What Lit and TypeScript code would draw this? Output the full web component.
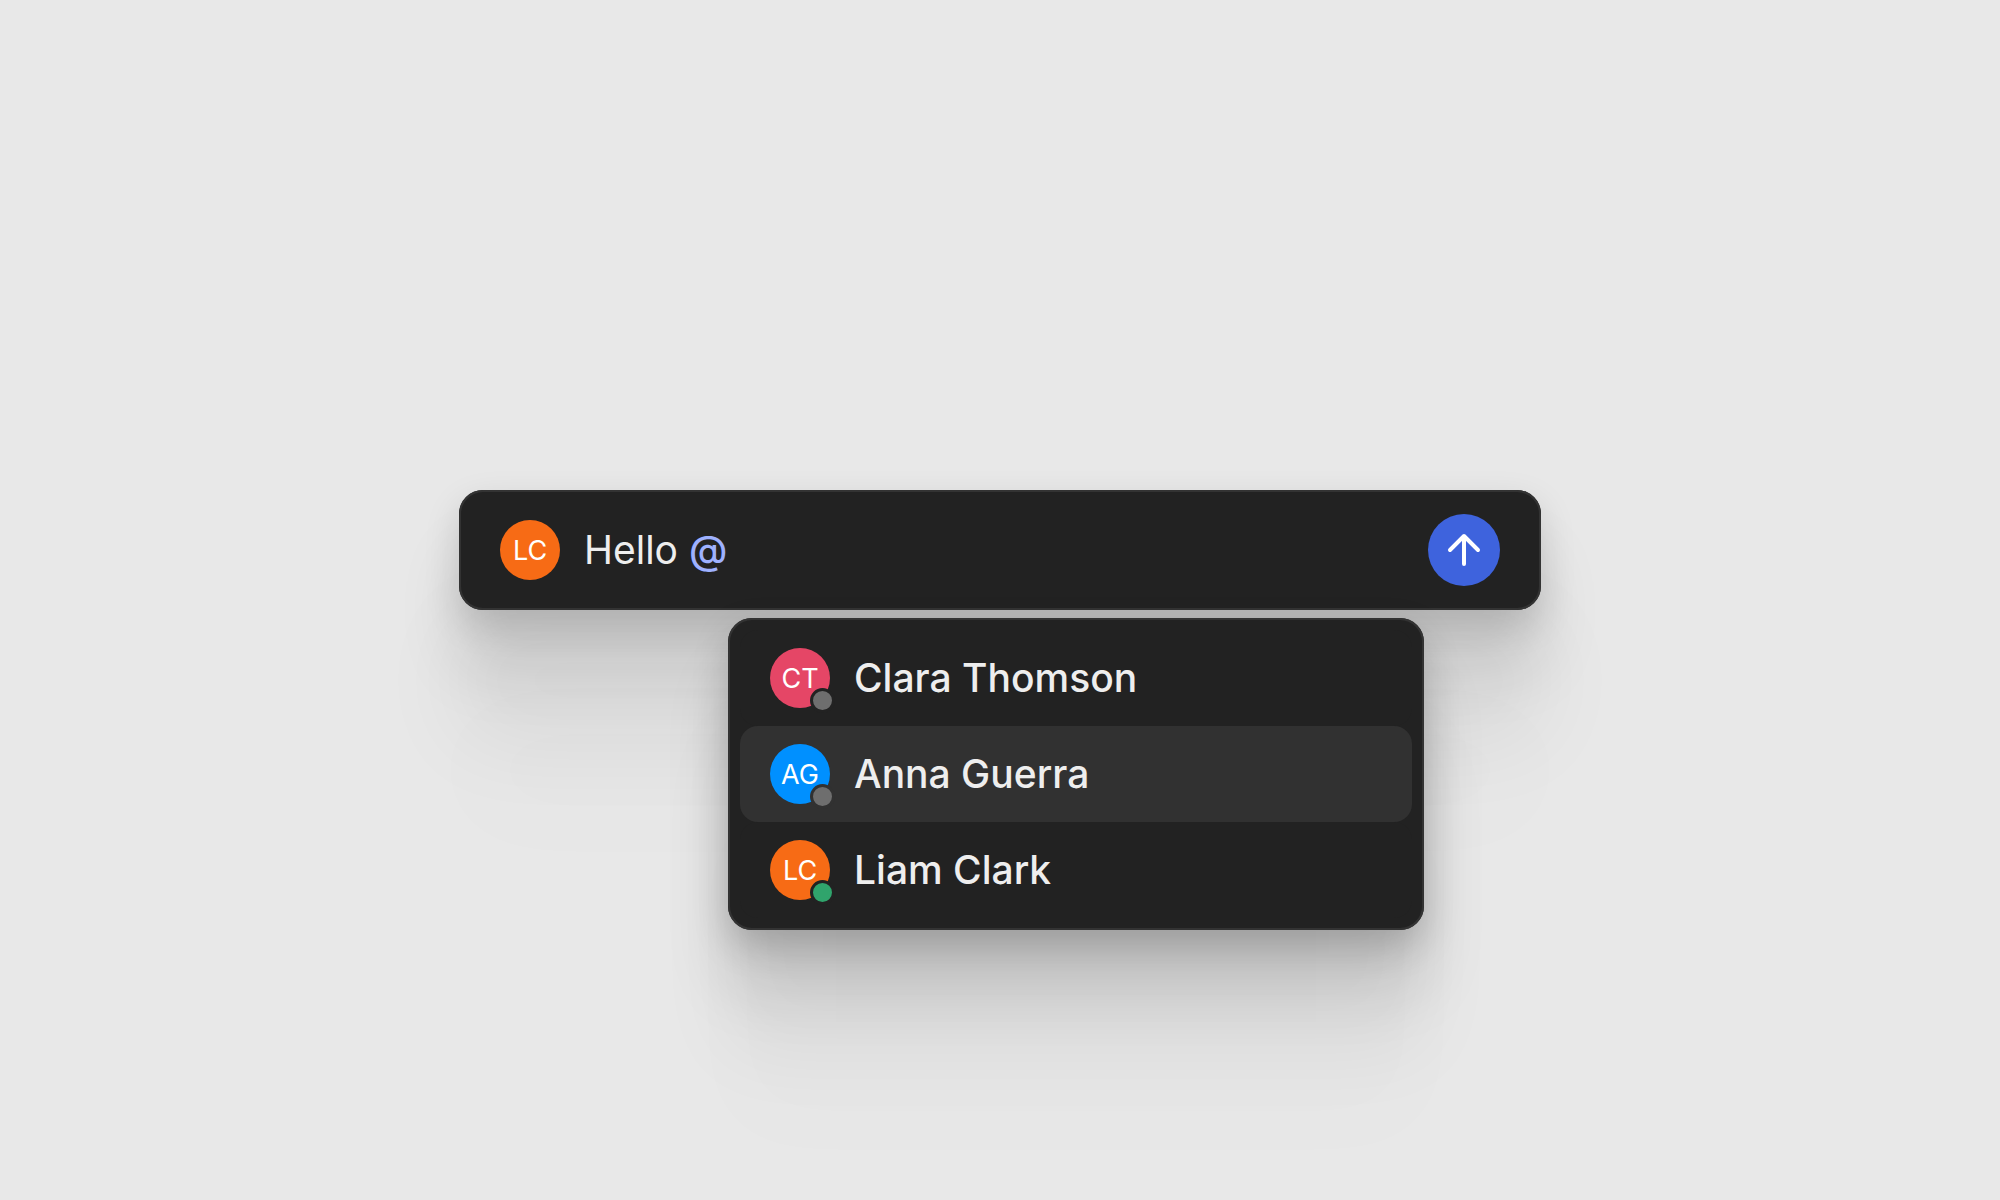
import { LitElement, html, css, nothing } from "lit";
import { customElement, property, state } from "lit/decorators.js";
import { classMap } from "lit/directives/class-map.js";

type Tone = "orange" | "crimson" | "blue";
type Presence = "offline" | "online";

interface Person {
  initials: string;
  name: string;
  tone: Tone;
  presence: Presence;
}

const PEOPLE: Person[] = [
  { initials: "CT", name: "Clara Thomson", tone: "crimson", presence: "offline" },
  { initials: "AG", name: "Anna Guerra", tone: "blue", presence: "offline" },
  { initials: "LC", name: "Liam Clark", tone: "orange", presence: "online" },
];

@customElement("user-avatar")
export class UserAvatar extends LitElement {
  static styles = css`
    :host {
      display: block;
      flex: none;
      position: relative;
    }
    .disc {
      display: grid;
      place-items: center;
      width: 60px;
      height: 60px;
      border-radius: 50%;
      color: #fff;
      font-size: 27px;
      font-weight: 400;
      line-height: 33px;
    }
    .orange {
      background: #f76b15;
    }
    .crimson {
      background: #e54666;
    }
    .blue {
      background: #0090ff;
    }
    .presence {
      position: absolute;
      right: -5px;
      bottom: -5px;
      box-sizing: border-box;
      width: 25px;
      height: 25px;
      border: 3px solid var(--row-surface, #222);
      border-radius: 50%;
    }
    .offline {
      background: #6e6e6e;
    }
    .online {
      background: #30a46c;
    }
  `;

  @property() initials = "";
  @property() tone: Tone = "orange";
  @property() presence?: Presence;

  render() {
    return html`
      <span class="disc ${this.tone}">${this.initials}</span>
      ${this.presence ? html`<span class="presence ${this.presence}"></span>` : nothing}
    `;
  }
}

@customElement("mention-menu")
export class MentionMenu extends LitElement {
  static styles = css`
    :host {
      display: block;
      box-sizing: border-box;
      padding: 12px;
      border-radius: 24px;
      background: #222;
    }
    .list {
      margin: 0;
      padding: 0;
      list-style: none;
    }
    .option {
      --row-surface: #222;
      display: flex;
      align-items: center;
      gap: 24px;
      width: 100%;
      padding: 18px 30px;
      border: 0;
      border-radius: 18px;
      background: var(--row-surface);
      color: #eee;
      font: inherit;
      font-weight: 500;
      text-align: left;
      cursor: pointer;
    }
    .active {
      --row-surface: #313131;
    }
  `;

  @property({ attribute: false }) people: Person[] = [];
  @state() private active = 1;

  render() {
    return html`
      <ul class="list">
        ${this.people.map(
          (p, i) => html`
            <li>
              <button
                type="button"
                class=${classMap({ option: true, active: i === this.active })}
                @mouseenter=${() => (this.active = i)}
              >
                <user-avatar .initials=${p.initials} .tone=${p.tone} .presence=${p.presence}></user-avatar>
                <span>${p.name}</span>
              </button>
            </li>
          `
        )}
      </ul>
    `;
  }
}

@customElement("app-root")
export class AppRoot extends LitElement {
  static styles = css`
    :host {
      display: flex;
      align-items: center;
      justify-content: center;
      box-sizing: border-box;
      min-height: 100vh;
      padding: 0 24px 100px;
      background: #e8e8e8;
      font-family: Inter, "Liberation Sans", sans-serif;
      font-size: 39px;
      line-height: 48px;
    }
    .composer {
      position: relative;
      width: 100%;
      max-width: 1082px;
    }
    .bar {
      display: flex;
      align-items: center;
      gap: 24px;
      box-sizing: border-box;
      padding: 24px 41px;
      border-radius: 24px;
      background: #222;
      box-shadow:
        inset 0 0 0 2px #333,
        0 14px 36px rgba(0, 0, 0, 0.14),
        0 60px 64px rgba(0, 0, 0, 0.11),
        0 130px 90px rgba(0, 0, 0, 0.06),
        0 220px 100px rgba(0, 0, 0, 0.01);
    }
    .field {
      flex: 1;
      display: grid;
      min-width: 0;
    }
    .field > * {
      grid-area: 1 / 1;
    }
    .message {
      color: #eee;
      white-space: pre;
    }
    .mention {
      color: #9eb1ff;
      font-weight: 500;
    }
    .input {
      min-width: 0;
      padding: 0;
      border: 0;
      outline: 0;
      background: none;
      color: transparent;
      caret-color: #eee;
      font: inherit;
    }
    .send {
      display: grid;
      place-items: center;
      flex: none;
      width: 72px;
      height: 72px;
      padding: 0;
      border: 0;
      border-radius: 50%;
      background: #3e63dd;
      color: #fff;
      cursor: pointer;
    }
    .menu {
      position: absolute;
      top: calc(100% + 8px);
      left: 269px;
      width: 696px;
      box-shadow:
        inset 0 0 0 2px #333,
        0 14px 36px rgba(0, 0, 0, 0.18),
        0 56px 64px rgba(0, 0, 0, 0.13),
        0 120px 80px rgba(0, 0, 0, 0.05),
        0 200px 90px rgba(0, 0, 0, 0.01);
    }
  `;

  @state() private text = "Hello @";

  private renderMessage() {
    return this.text
      .split(/(@\w*)/)
      .map((part) => (part.startsWith("@") ? html`<span class="mention">${part}</span>` : part));
  }

  render() {
    return html`
      <form class="composer" @submit=${(e: Event) => e.preventDefault()}>
        <div class="bar">
          <user-avatar initials="LC" tone="orange"></user-avatar>
          <div class="field">
            <div class="message" aria-hidden="true">${this.renderMessage()}</div>
            <input
              class="input"
              type="text"
              aria-label="Message"
              autocomplete="off"
              .value=${this.text}
              @input=${(e: Event) => (this.text = (e.target as HTMLInputElement).value)}
            />
          </div>
          <button class="send" type="submit" aria-label="Send">
            <svg
              width="48"
              height="48"
              viewBox="0 0 48 48"
              fill="none"
              stroke="currentColor"
              stroke-width="4"
              stroke-linecap="round"
              stroke-linejoin="round"
              aria-hidden="true"
            >
              <path d="M24 38V10M10 24L24 10L38 24" />
            </svg>
          </button>
        </div>
        <mention-menu class="menu" .people=${PEOPLE}></mention-menu>
      </form>
    `;
  }
}
